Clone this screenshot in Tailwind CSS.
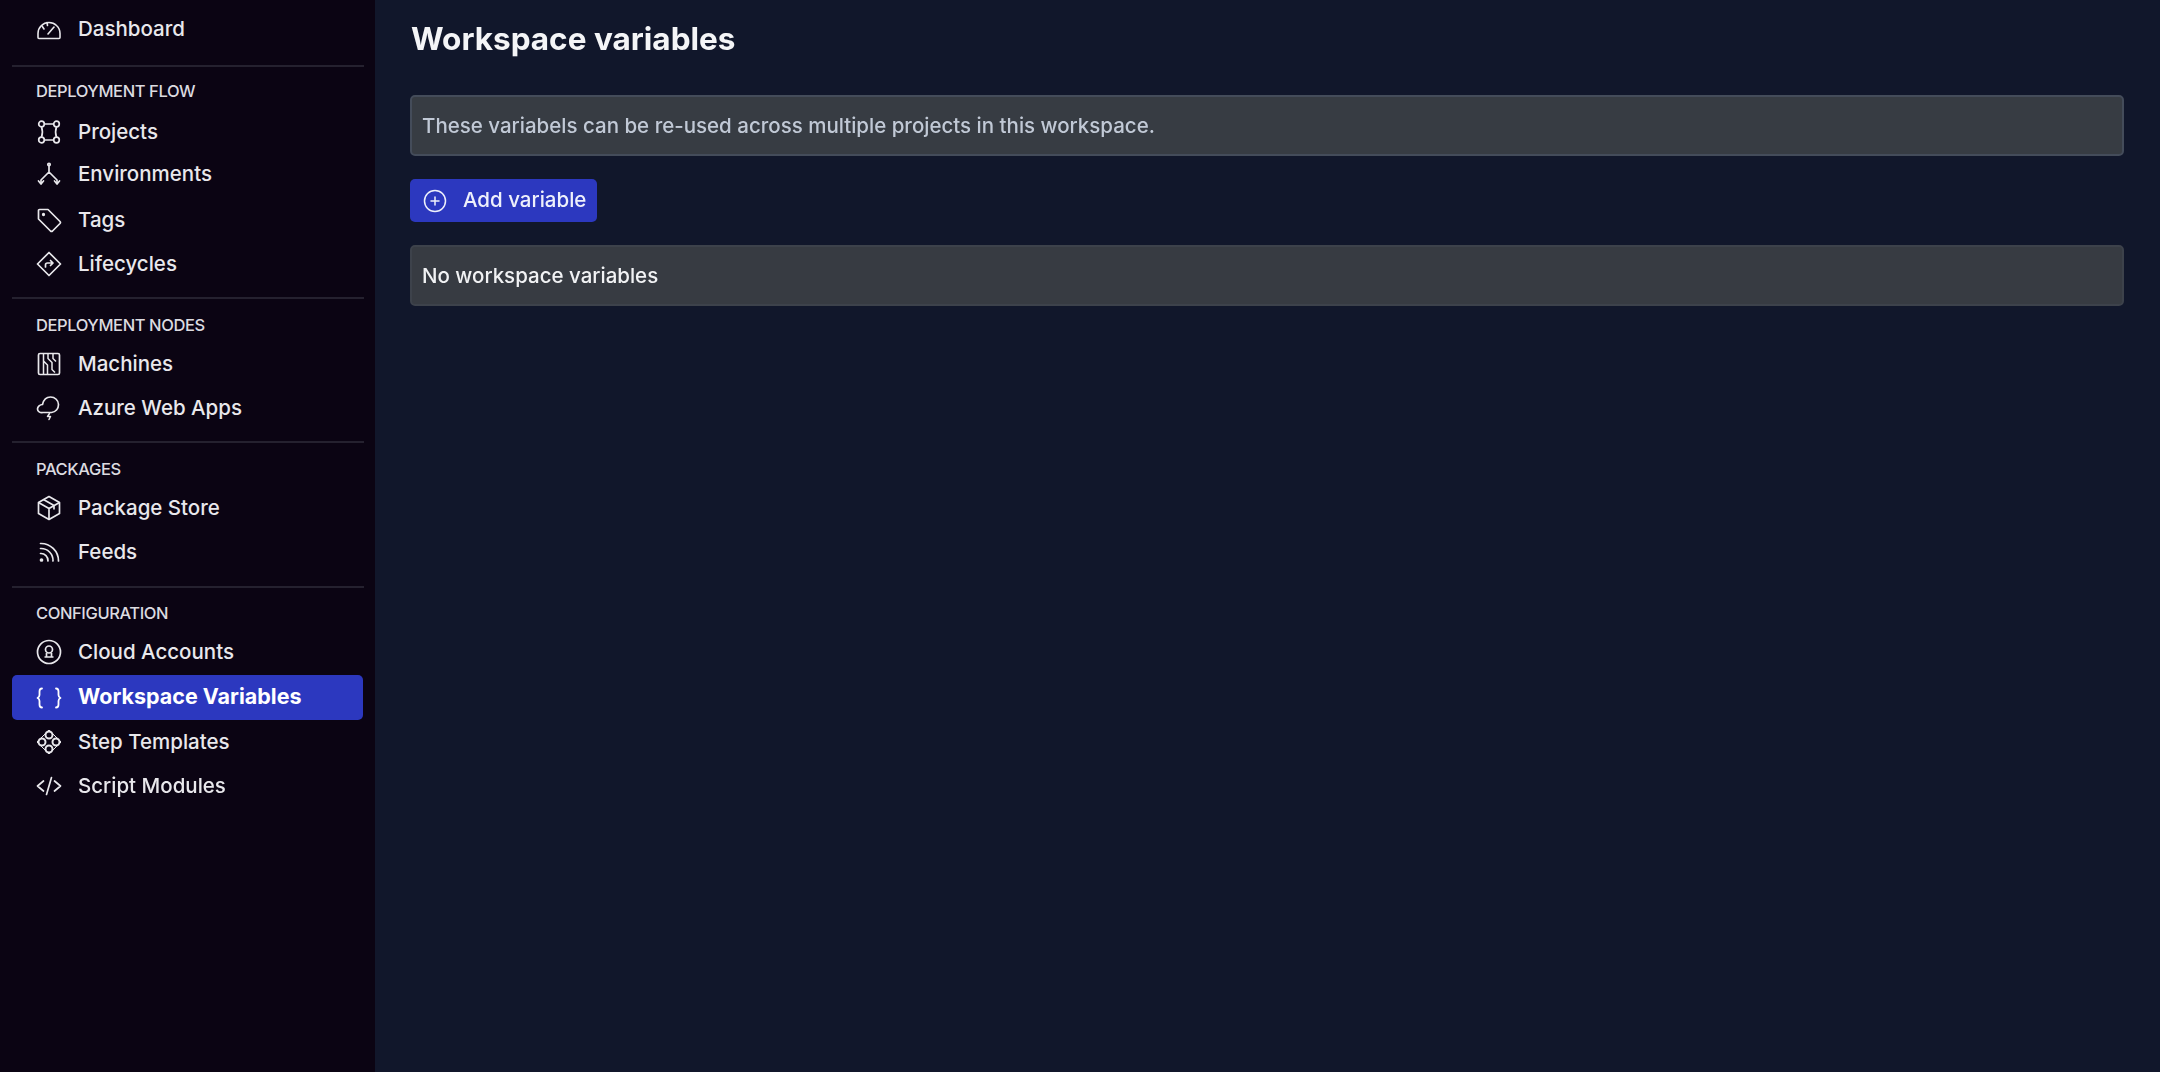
<!doctype html>
<html>
<head>
<meta charset="utf-8">
<title>Workspace variables</title>
<script src="https://cdn.jsdelivr.net/npm/@tailwindcss/browser@4"></script>
</head>
<body class="bg-[#11172b] font-['Inter',sans-serif] overflow-hidden">
<div class="flex h-[1072px] w-[2160px] blur-[0.5px]">

  <!-- sidebar -->
  <aside class="w-[375px] shrink-0 bg-[#0b0413] px-3 text-[20.5px] leading-[24px] font-medium text-[#e9e8ec]">
    <a class="flex h-11 mt-[7px] items-center pl-6 gap-4">
      <svg class="w-[26px] h-[26px]" viewBox="0 0 26 26" fill="none" stroke="currentColor" stroke-width="1.6" stroke-linecap="round" stroke-linejoin="round"><path d="M2 21.500v-4A11 11 0 0 1 13 6.500c3 0 5.500 1 7.500 3A11 11 0 0 1 24 17.500v4a1 1 0 0 1-1 1H3a1 1 0 0 1-1-1z"/><path d="M12 18l6-7"/><path d="M6 10l2 3M11 6.500l.5 3"/></svg>
      <span>Dashboard</span>
    </a>
    <hr class="mt-[14px] h-0.5 border-0 bg-[#25212f] w-[352px]">

    <p class="mt-[14px] pl-6 h-5 text-[16.5px] leading-5 tracking-[-0.4px] text-[#dcdbe0]">DEPLOYMENT FLOW</p>
    <a class="flex h-11 mt-[9px] items-center pl-6 gap-4">
      <svg class="w-[26px] h-[26px]" viewBox="0 0 26 26" fill="none" stroke="currentColor" stroke-width="1.7"><circle cx="5.500" cy="5" r="2.800"/><circle cx="20.500" cy="5" r="2.800"/><circle cx="5.500" cy="21" r="2.800"/><circle cx="20.500" cy="21" r="2.800"/><path d="M8.300 5h9.400M8.300 21h9.400M5.500 7.800c1.200 3.400 1.200 7 0 10.400M20.500 7.800c-1.200 3.400-1.200 7 0 10.400"/></svg>
      <span>Projects</span>
    </a>
    <a class="flex h-11 -mt-0.5 items-center pl-6 gap-4">
      <svg class="w-[26px] h-[26px]" viewBox="0 0 26 26" fill="none" stroke="currentColor" stroke-width="1.7" stroke-linecap="round" stroke-linejoin="round"><circle cx="13" cy="3.500" r="1.200"/><path d="M13 5v6l-8 8v3M13 11l8 8v3"/><path d="M2.500 20l2.500 3 2.500-3M18.500 20l2.500 3 2.500-3"/></svg>
      <span>Environments</span>
    </a>
    <a class="flex h-11 mt-0.5 items-center pl-6 gap-4">
      <svg class="w-[26px] h-[26px]" viewBox="0 0 26 26" fill="none" stroke="currentColor" stroke-width="1.7" stroke-linejoin="round"><path d="M2.500 3.500a1 1 0 0 1 1-1h8.500l12 12a1.500 1.500 0 0 1 0 2L16.500 24a1.500 1.500 0 0 1-2 0l-12-12z"/><circle cx="7.500" cy="7.500" r="0.800" fill="currentColor"/></svg>
      <span>Tags</span>
    </a>
    <a class="flex h-11 items-center pl-6 gap-4">
      <svg class="w-[26px] h-[26px]" viewBox="0 0 26 26" fill="none" stroke="currentColor" stroke-width="1.7" stroke-linecap="round" stroke-linejoin="round"><path d="M13 1.500L24.500 13 13 24.500 1.500 13z"/><path d="M9.500 16v-2a2 2 0 0 1 2-2h5M14.500 9.500l2.500 2.500-2.500 2.500"/></svg>
      <span>Lifecycles</span>
    </a>
    <hr class="mt-[11px] h-0.5 border-0 bg-[#25212f] w-[352px]">

    <p class="mt-4 pl-6 h-5 text-[16.5px] leading-5 tracking-[-0.4px] text-[#dcdbe0]">DEPLOYMENT NODES</p>
    <a class="flex h-11 mt-[7px] items-center pl-6 gap-4">
      <svg class="w-[26px] h-[26px]" viewBox="0 0 26 26" fill="none" stroke="currentColor" stroke-width="1.7" stroke-linejoin="round"><rect x="2.500" y="2.500" width="21" height="21" rx="1.500"/><path d="M7.500 2.500v21M7.500 10l4 4v9.500M12 2.500v5l4 4v7l3 3M17 2.500v5l3 3" stroke-width="1.500"/></svg>
      <span>Machines</span>
    </a>
    <a class="flex h-11 items-center pl-6 gap-4">
      <svg class="w-[26px] h-[26px]" viewBox="0 0 26 26" fill="none" stroke="currentColor" stroke-width="1.7" stroke-linecap="round" stroke-linejoin="round"><path d="M7 17.500c-3 .5-5.500-1-5.500-3.500S4 9.500 6.500 9.500C7.500 5 10.500 2 14.500 2c4.500 0 8 3.500 8 7.500 0 4.500-3 7.500-7 8H7z"/><path d="M13.500 18.500l-2 3h3l-1.500 3" stroke-width="1.500"/></svg>
      <span>Azure Web Apps</span>
    </a>
    <hr class="mt-[11px] h-0.5 border-0 bg-[#25212f] w-[352px]">

    <p class="mt-4 pl-6 h-5 text-[16.5px] leading-5 tracking-[-0.4px] text-[#dcdbe0]">PACKAGES</p>
    <a class="flex h-11 mt-[7px] items-center pl-6 gap-4">
      <svg class="w-[26px] h-[26px]" viewBox="0 0 26 26" fill="none" stroke="currentColor" stroke-width="1.7" stroke-linejoin="round"><path d="M13 1.500l10.500 6v11L13 24.500l-10.500-6v-11z"/><path d="M2.500 7.500L13 13.500l10.500-6M13 13.500v11M7.500 4.500L18 10.500v4"/></svg>
      <span>Package Store</span>
    </a>
    <a class="flex h-11 items-center pl-6 gap-4">
      <svg class="w-[26px] h-[26px]" viewBox="0 0 26 26" fill="none" stroke="currentColor" stroke-width="1.700" stroke-linecap="round"><circle cx="5.500" cy="21" r="1" fill="currentColor"/><path d="M4.500 14.500a7 7 0 0 1 7.500 7.500M4.500 9.500a12 12 0 0 1 12.500 12.500M4.500 4.500a17.500 17.500 0 0 1 18 17.500"/></svg>
      <span>Feeds</span>
    </a>
    <hr class="mt-3 h-0.5 border-0 bg-[#25212f] w-[352px]">

    <p class="mt-[15px] pl-6 h-5 text-[16.5px] leading-5 tracking-[-0.4px] text-[#dcdbe0]">CONFIGURATION</p>
    <a class="flex h-11 mt-[7px] items-center pl-6 gap-4">
      <svg class="w-[26px] h-[26px]" viewBox="0 0 26 26" fill="none" stroke="currentColor" stroke-width="1.7" stroke-linejoin="round"><circle cx="13" cy="13" r="11.500"/><circle cx="13" cy="10.500" r="3.500"/><path d="M8.500 18h9M10.500 14v4M15.500 14v4"/></svg>
      <span>Cloud Accounts</span>
    </a>
    <a class="flex h-[45px] mt-px items-center pl-6 gap-4 rounded-[5px] bg-[#2c38bf] text-[21.5px] font-bold text-white">
      <svg class="w-[26px] h-[26px]" viewBox="0 0 26 26" fill="none" stroke="currentColor" stroke-width="1.800" stroke-linecap="round" stroke-linejoin="round"><path d="M6 3.500c-2 0-2.500 1-2.500 3v3.500c0 1.500-.8 2.500-2 3 1.200.5 2 1.500 2 3v3.500c0 2 .5 3 2.500 3M20 3.500c2 0 2.500 1 2.500 3v3.500c0 1.500.8 2.500 2 3-1.200.5-2 1.500-2 3v3.500c0 2-.5 3-2.500 3"/></svg>
      <span class="pb-[3px]">Workspace Variables</span>
    </a>
    <a class="flex h-11 items-center pl-6 gap-4">
      <svg class="w-[26px] h-[26px]" viewBox="0 0 26 26" fill="none" stroke="currentColor" stroke-width="2"><circle cx="13" cy="6" r="3.500"/><circle cx="13" cy="20" r="3.500"/><circle cx="6" cy="13" r="3.500"/><circle cx="20" cy="13" r="3.500"/><path d="M13 1L25 13 13 25 1 13z" stroke-width="1" stroke-linejoin="round"/></svg>
      <span>Step Templates</span>
    </a>
    <a class="flex h-11 items-center pl-6 gap-4">
      <svg class="w-[26px] h-[26px]" viewBox="0 0 26 26" fill="none" stroke="currentColor" stroke-width="1.700" stroke-linecap="round" stroke-linejoin="round"><path d="M7.500 8L1.500 13l6 5M18.500 8l6 5-6 5M15.500 4.500l-5 17"/></svg>
      <span>Script Modules</span>
    </a>
  </aside>

  <!-- main -->
  <main class="flex-1 pl-[35px] pr-9 pt-[20px] text-[20.5px] leading-6 font-medium">
    <h1 class="h-[38px] pl-px text-[31.5px] leading-[38px] font-bold text-[#f4f5f7]">Workspace variables</h1>
    <div class="mt-[37px] h-[61px] flex items-center px-[10px] rounded-[5px] bg-[#373c43] border-2 border-[#444c5a] text-[#c1c9d6]">These variabels can be re-used across multiple projects in this workspace.</div>
    <button class="mt-[23px] flex h-[43px] w-[187px] items-center pl-[13px] gap-4 rounded-[5px] bg-[#2c38bf] text-[#eef0fb]">
      <svg class="w-[24px] h-[24px]" viewBox="0 0 24 24" fill="none" stroke="currentColor" stroke-width="1.500" stroke-linecap="round"><circle cx="12" cy="12" r="10.500"/><path d="M12 8v8M8 12h8"/></svg>
      <span class="pb-px">Add variable</span>
    </button>
    <div class="mt-[23px] h-[61px] flex items-center px-[10px] rounded-[5px] bg-[#373b42] border-2 border-[#3d424b] text-[#f1f2f4]">No workspace variables</div>
  </main>
</div>
</body>
</html>
